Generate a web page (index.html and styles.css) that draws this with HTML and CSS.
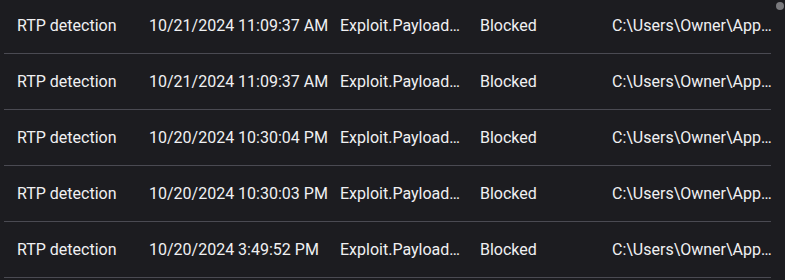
FILE: index.html
```html
<!DOCTYPE html>
<html>
<head>
<meta charset="utf-8">
<link rel="stylesheet" href="styles.css">
</head>
<body>
<div class="list">
  <div class="row"><div class="cell">RTP detection</div><div class="cell">10/21/2024 11:09:37 AM</div><div class="cell name">Exploit.PayloadProcessBlock</div><div class="cell">Blocked</div><div class="cell path">C:\Users\Owner\AppData\Local\Temp</div></div>
  <div class="row"><div class="cell">RTP detection</div><div class="cell">10/21/2024 11:09:37 AM</div><div class="cell name">Exploit.PayloadProcessBlock</div><div class="cell">Blocked</div><div class="cell path">C:\Users\Owner\AppData\Local\Temp</div></div>
  <div class="row"><div class="cell">RTP detection</div><div class="cell">10/20/2024 10:30:04 PM</div><div class="cell name">Exploit.PayloadProcessBlock</div><div class="cell">Blocked</div><div class="cell path">C:\Users\Owner\AppData\Local\Temp</div></div>
  <div class="row"><div class="cell">RTP detection</div><div class="cell">10/20/2024 10:30:03 PM</div><div class="cell name">Exploit.PayloadProcessBlock</div><div class="cell">Blocked</div><div class="cell path">C:\Users\Owner\AppData\Local\Temp</div></div>
  <div class="row"><div class="cell">RTP detection</div><div class="cell">10/20/2024 3:49:52 PM</div><div class="cell name">Exploit.PayloadProcessBlock</div><div class="cell">Blocked</div><div class="cell path">C:\Users\Owner\AppData\Local\Temp</div></div>
</div>
<div class="thumb"></div>
</body>
</html>
```
FILE: styles.css
```css
html, body {
  margin: 0;
  padding: 0;
  background: #1c1c20;
  height: 100%;
  overflow: hidden;
}
body {
  font-family: Roboto, "Liberation Sans", sans-serif;
  font-size: 16px;
  color: #f0f0f2;
}
.list {
  margin-top: -2px;
  margin-left: 4px;
  width: 767px;
}
.row {
  display: grid;
  grid-template-columns: 132px 191px 140px 132px minmax(0, 1fr);
  align-items: center;
  height: 55px;
  padding-left: 13px;
  border-bottom: 1px solid #4a4a52;
}
.cell {
  min-width: 0;
  white-space: nowrap;
  overflow: hidden;
  text-overflow: ellipsis;
}
.name {
  padding-right: 16px;
}
.path {
  margin-right: -6px;
}
.thumb {
  position: absolute;
  top: 2px;
  left: 776px;
  width: 8px;
  height: 8px;
  border-radius: 50%;
  background: #7a7a7e;
}
```
